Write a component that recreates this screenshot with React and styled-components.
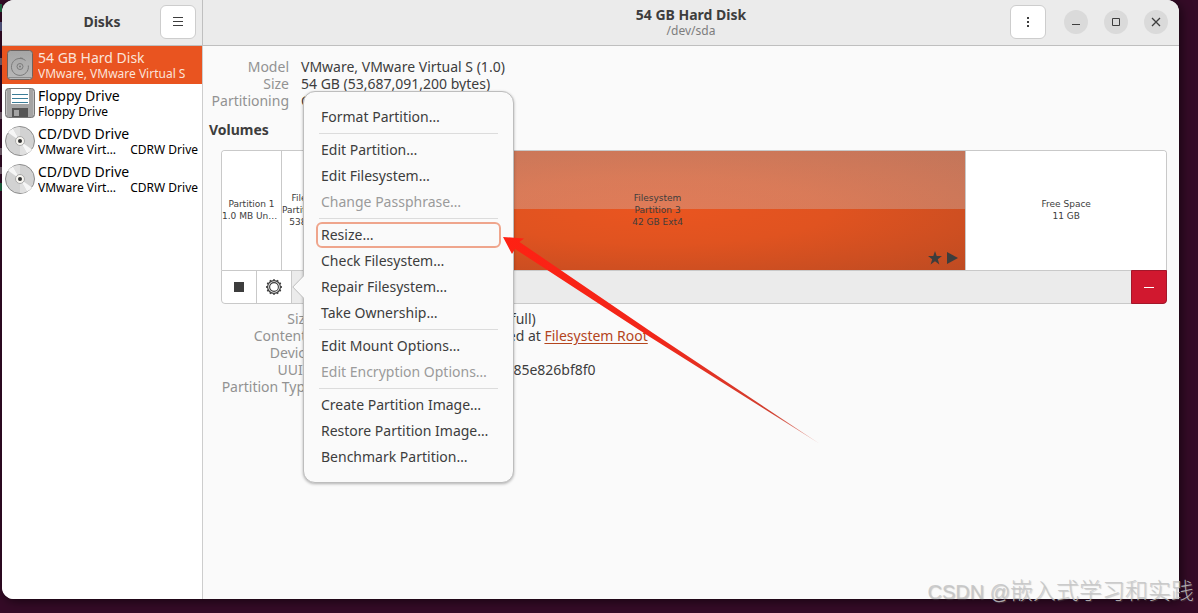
import React from "react";
import styled, { createGlobalStyle } from "styled-components";

const GlobalStyle = createGlobalStyle`
  * { box-sizing: border-box; }
  html, body, #root { height: 100%; }
  body {
    margin: 0;
    background: #350b27;
    color: #3d3d3d;
    font-family: "Noto Sans", "Open Sans", sans-serif;
    font-size: 14px;
    line-height: 17px;
  }
  button { font: inherit; color: inherit; padding: 0; margin: 0; }
`;

const Desktop = styled.div`
  position: relative;
  min-height: 100%;
  display: flex;
  padding: 0 19px 14px 2px;
  overflow: hidden;
  background:
    linear-gradient(#1f6b45, #1f6b45) 0 4px / 2px 8px no-repeat,
    linear-gradient(#5c5f8c, #5c5f8c) 0 22px / 2px 9px no-repeat,
    linear-gradient(#7a6474, #7a6474) 0 58px / 2px 7px no-repeat,
    linear-gradient(#7a6474, #7a6474) 0 112px / 2px 7px no-repeat,
    linear-gradient(#7a6474, #7a6474) 0 148px / 2px 7px no-repeat,
    linear-gradient(#7a6474, #7a6474) 0 167px / 2px 7px no-repeat,
    linear-gradient(#1f6b45, #1f6b45) 0 183px / 2px 8px no-repeat,
    #350b27;
`;

const Window = styled.div`
  flex: 1;
  min-width: 0;
  display: grid;
  grid-template-columns: 201px minmax(0, 1fr);
  grid-template-rows: 46px 1fr;
  border-radius: 12px 12px 0 12px;
  background: #fafafa;
  box-shadow: 2px 2px 12px rgba(0, 0, 0, 0.6);
`;

const HeaderBar = styled.header`
  display: grid;
  grid-template-columns: 1fr auto 1fr;
  align-items: center;
  background: #ebebeb;
  border-bottom: 1px solid #bfbfbf;
  border-right: ${(p) => (p.$side ? "1px solid #bfbfbf" : "0")};
  border-radius: ${(p) => (p.$side ? "12px 0 0 0" : "0 12px 0 0")};
  padding: 0 ${(p) => (p.$side ? 6 : 11)}px 2px;
`;

const HeaderTitle = styled.h1`
  grid-column: 2;
  margin: 0;
  font-size: 14px;
  line-height: 17px;
  font-weight: 700;
  text-align: center;
`;

const HeaderSubtitle = styled.span`
  display: block;
  font-size: 12px;
  line-height: 15px;
  font-weight: 400;
  color: #7d7d7d;
`;

const HeaderEnd = styled.div`
  display: flex;
  align-items: center;
  justify-content: flex-end;
  gap: 16px;
`;

const HeaderButton = styled.button`
  width: 36px;
  height: 34px;
  display: grid;
  place-items: center;
  background: #fff;
  border: 1px solid #cdcdcd;
  border-radius: 6px;
  margin-right: ${(p) => (p.$spaced ? 2 : 0)}px;
`;

const WindowButton = styled.button`
  width: 24px;
  height: 24px;
  display: grid;
  place-items: center;
  border: 0;
  border-radius: 50%;
  background: #dadada;
`;

const Sidebar = styled.ul`
  margin: 0;
  padding: 0;
  list-style: none;
  background: #fff;
  border-right: 1px solid #cdcdcd;
  border-radius: 0 0 0 12px;
`;

const DriveRow = styled.button`
  width: 100%;
  height: 38px;
  display: flex;
  align-items: center;
  gap: 3px;
  padding: 0 4px 0 3px;
  border: 0;
  text-align: left;
  background: ${(p) => (p.$active ? "#e95420" : "transparent")};
  color: ${(p) => (p.$active ? "#fbe3da" : "#000")};
`;

const DriveText = styled.span`
  flex: 1;
  min-width: 0;
`;

const DriveName = styled.span`
  display: block;
  font-size: 14px;
  line-height: 17px;
`;

const DriveMeta = styled.span`
  display: flex;
  justify-content: space-between;
  gap: 8px;
  font-size: 12px;
  line-height: 15px;
  white-space: nowrap;
`;

const Clip = styled.span`
  overflow: hidden;
  text-overflow: ellipsis;
`;

const Main = styled.main`
  padding: 12px 12px 12px 6px;
`;

const Details = styled.dl`
  display: grid;
  grid-template-columns: ${(p) => p.$labels}px 1fr;
  column-gap: ${(p) => p.$gap}px;
  margin: 0 0 0 ${(p) => p.$indent}px;
  white-space: nowrap;
`;

const Term = styled.dt`
  color: #929292;
  text-align: right;
`;

const Value = styled.dd`
  margin: 0;
  min-height: 17px;
`;

const Link = styled.a`
  color: #b4451d;
  text-decoration: underline;
  text-underline-offset: 2px;
`;

const SectionTitle = styled.h2`
  margin: 12px 0;
  font-size: 14px;
  line-height: 17px;
  font-weight: 700;
`;

const Volumes = styled.section`
  margin: 0 0 6px 12px;
`;

const VolumeGraph = styled.div`
  display: flex;
  height: 120px;
  border: 1px solid #c9c9c9;
  border-bottom: 0;
  border-radius: 4px 4px 0 0;
  background: #fff;
  overflow: hidden;
`;

const Partition = styled.div`
  position: relative;
  flex: ${(p) => p.$share} 1 0;
  min-width: 0;
  display: flex;
  flex-direction: column;
  justify-content: center;
  padding-bottom: 2px;
  border-right: 1px solid #c9c9c9;
  font-family: "DejaVu Sans", sans-serif;
  font-size: 9px;
  line-height: 12px;
  text-align: center;
  white-space: nowrap;
  color: #3d3d3d;
  background: ${(p) =>
    p.$selected
      ? "linear-gradient(rgba(203,203,203,.33), rgba(203,203,203,.33)) top / 100% 58px no-repeat, radial-gradient(ellipse farthest-corner at 50% 50%, #ea5520 0%, #e05320 40%, #be4b22 100%)"
      : "#fff"};
  &:last-child { border-right: 0; }
`;

const PartitionFlags = styled.span`
  position: absolute;
  right: 6px;
  bottom: 5px;
  display: flex;
  gap: 4px;
`;

const Toolbar = styled.div`
  display: flex;
  height: 34px;
  background: #ebebeb;
  border: 1px solid #c9c9c9;
  border-radius: 0 0 4px 4px;
`;

const ToolButton = styled.button`
  width: 35px;
  height: 32px;
  display: grid;
  place-items: center;
  background: #fff;
  border: 0;
  border-right: 1px solid #c9c9c9;
  border-radius: ${(p) => (p.$first ? "0 0 0 4px" : "0")};
`;

const DeleteButton = styled.button`
  width: 36px;
  height: 34px;
  margin: -1px -1px -1px auto;
  display: grid;
  place-items: center;
  background: #d1182f;
  border: 1px solid #a3172a;
  border-radius: 0 0 4px 0;
`;

const MenuAnchor = styled.div`
  position: relative;
`;

const Popover = styled.div`
  position: absolute;
  z-index: 2;
  top: 50%;
  left: calc(100% + 11px);
  transform: translateY(-50%);
  width: 211px;
  padding: 12px;
  background: #fafafa;
  border: 1px solid #bdbdbd;
  border-radius: 12px;
  box-shadow: 0 1px 3px rgba(0, 0, 0, 0.3);
`;

const PopoverTail = styled.svg`
  position: absolute;
  top: calc(50% - 12px);
  right: 100%;
`;

const MenuItem = styled.button`
  display: block;
  width: 100%;
  height: 26px;
  padding: 0 3px 2px;
  text-align: left;
  white-space: nowrap;
  background: transparent;
  border: 2px solid ${(p) => (p.$focused ? "#efa58c" : "transparent")};
  border-radius: 6px;
  color: #3d3d3d;
  &:disabled { color: #9b9b9b; }
`;

const MenuSeparator = styled.hr`
  height: 1px;
  margin: 3px;
  border: 0;
  background: #dcdcdc;
`;

const PointerArrow = styled.svg`
  position: absolute;
  z-index: 3;
  left: 503px;
  top: 236px;
  pointer-events: none;
`;

const Watermark = styled.div`
  position: absolute;
  z-index: 3;
  right: 4px;
  bottom: 6px;
  font-family: "Liberation Sans", "Noto Sans CJK SC", sans-serif;
  font-size: 20px;
  line-height: 30px;
  font-weight: 300;
  white-space: nowrap;
  color: rgba(196, 196, 196, 0.85);
  text-shadow: 1px 1px 1px rgba(110, 110, 110, 0.35);
`;

const WatermarkName = styled.span`
  font-size: 23px;
`;

const HardDiskIcon = () => (
  <svg width="30" height="32" viewBox="0 0 30 32">
    <defs>
      <linearGradient id="hd" x1="0" y1="0" x2="0" y2="1">
        <stop offset="0" stopColor="#a5a5a5" />
        <stop offset="1" stopColor="#b9b9b9" />
      </linearGradient>
    </defs>
    <rect x="2.5" y="1.5" width="25" height="29" rx="3" fill="url(#hd)" stroke="#6e625e" />
    <path d="M3.5 28.5h23" stroke="#8b8b8b" />
    <path d="M20.5 11.5A8.500 8.500 0 1 0 23.300 16.500M15 9a8.500 8.500 0 0 1 3 .5" fill="none" stroke="#7b7b7b" />
    <circle cx="15" cy="17.5" r="3" fill="none" stroke="#7b7b7b" />
    <circle cx="15" cy="17.5" r="1" fill="#7b7b7b" />
  </svg>
);

const FloppyIcon = () => (
  <svg width="30" height="32" viewBox="0 0 30 32">
    <rect x=".5" y="1.5" width="29" height="29" rx="3" fill="#a4a4a4" stroke="#777" />
    <path d="M1.5 4v24M28.5 4v24" stroke="#c0c0c0" />
    <rect x="6" y="2" width="18" height="15" fill="#fff" />
    <path d="M7 7.5h16M7 11.5h16M7 15.5h16" stroke="#3c7d98" />
    <rect x="7" y="21" width="16" height="9" fill="#555" />
    <rect x="9" y="23" width="5" height="6" fill="#a4a4a4" />
  </svg>
);

const DiscIcon = () => (
  <svg width="30" height="30" viewBox="0 0 30 30">
    <circle cx="15" cy="15" r="14.5" fill="#d2d2d2" stroke="#8d8d8d" />
    <path d="M15 15L3 6.5A14 14 0 0 1 8 2.500zM15 15L27 23.500A14 14 0 0 1 22 27.500z" fill="#f6f6f6" />
    <path d="M15 15L8 2.500A14 14 0 0 1 15 1zM15 15L22 27.500A14 14 0 0 1 15 29z" fill="#e0e0e0" />
    <circle cx="15" cy="15" r="4.5" fill="#f7f5f0" stroke="#aaa" />
    <circle cx="15" cy="15" r="2" fill="#333" />
  </svg>
);

const teeth = Array.from({ length: 12 }, (_, i) => i * 30);

const GearIcon = () => (
  <svg width="16" height="16" viewBox="0 0 16 16" fill="none" stroke="#3d3d3d">
    {teeth.map((a) => (
      <path key={a} d="M7.100 .8h1.800" strokeWidth="1.300" transform={`rotate(${a} 8 8)`} />
    ))}
    <circle cx="8" cy="8" r="6.4" strokeWidth="1.200" />
    <circle cx="8" cy="8" r="4.4" strokeWidth="1.100" />
  </svg>
);

const drives = [
  { name: "54 GB Hard Disk", meta: "VMware, VMware Virtual S", icon: <HardDiskIcon />, active: true },
  { name: "Floppy Drive", meta: "Floppy Drive", icon: <FloppyIcon /> },
  { name: "CD/DVD Drive", meta: "VMware Virtual SATA", extra: "CDRW Drive", icon: <DiscIcon /> },
  { name: "CD/DVD Drive", meta: "VMware Virtual SATA", extra: "CDRW Drive", icon: <DiscIcon /> },
];

const menu = [
  [{ label: "Format Partition…" }],
  [{ label: "Edit Partition…" }, { label: "Edit Filesystem…" }, { label: "Change Passphrase…", disabled: true }],
  [
    { label: "Resize…", focused: true },
    { label: "Check Filesystem…" },
    { label: "Repair Filesystem…" },
    { label: "Take Ownership…" },
  ],
  [{ label: "Edit Mount Options…" }, { label: "Edit Encryption Options…", disabled: true }],
  [{ label: "Create Partition Image…" }, { label: "Restore Partition Image…" }, { label: "Benchmark Partition…" }],
];

function VolumeMenu() {
  return (
    <Popover role="menu" aria-label="Additional partition options">
      <PopoverTail width="12" height="24" viewBox="0 0 12 24">
        <path d="M12 .5L.8 12 12 23.500" fill="#fafafa" stroke="#bdbdbd" />
      </PopoverTail>
      {menu.map((group, i) => (
        <React.Fragment key={i}>
          {i > 0 && <MenuSeparator />}
          {group.map((item) => (
            <MenuItem key={item.label} role="menuitem" disabled={item.disabled} $focused={item.focused}>
              {item.label}
            </MenuItem>
          ))}
        </React.Fragment>
      ))}
    </Popover>
  );
}

export default function App() {
  return (
    <Desktop>
      <GlobalStyle />
      <Window>
        <HeaderBar $side>
          <HeaderTitle as="h2">Disks</HeaderTitle>
          <HeaderEnd>
            <HeaderButton aria-label="Main menu">
              <svg width="16" height="16" viewBox="0 0 16 16" stroke="#3d3d3d">
                <path d="M3 3.500h10M3 7.500h10M3 11.500h10" />
              </svg>
            </HeaderButton>
          </HeaderEnd>
        </HeaderBar>
        <HeaderBar>
          <HeaderTitle>
            54 GB Hard Disk
            <HeaderSubtitle>/dev/sda</HeaderSubtitle>
          </HeaderTitle>
          <HeaderEnd>
            <HeaderButton aria-label="Drive options" $spaced>
              <svg width="16" height="16" viewBox="0 0 16 16" fill="#3d3d3d">
                <path d="M7 3h2v2H7zM7 7h2v2H7zM7 11h2v2H7z" />
              </svg>
            </HeaderButton>
            <WindowButton aria-label="Minimize">
              <svg width="16" height="16" viewBox="0 0 16 16" stroke="#3d3d3d">
                <path d="M4 10.500h8" />
              </svg>
            </WindowButton>
            <WindowButton aria-label="Maximize">
              <svg width="16" height="16" viewBox="0 0 16 16" stroke="#3d3d3d" fill="none">
                <path d="M4.500 4.500h7v7h-7z" />
              </svg>
            </WindowButton>
            <WindowButton aria-label="Close">
              <svg width="16" height="16" viewBox="0 0 16 16" stroke="#3d3d3d" strokeWidth="1.300">
                <path d="M4 4l8 8M12 4l-8 8" />
              </svg>
            </WindowButton>
          </HeaderEnd>
        </HeaderBar>
        <Sidebar>
          {drives.map((d, i) => (
            <li key={i}>
              <DriveRow $active={d.active}>
                {d.icon}
                <DriveText>
                  <DriveName>{d.name}</DriveName>
                  <DriveMeta>
                    <Clip>{d.meta}</Clip>
                    {d.extra && <span>{d.extra}</span>}
                  </DriveMeta>
                </DriveText>
              </DriveRow>
            </li>
          ))}
        </Sidebar>
        <Main>
          <Details $labels={80} $gap={12} $indent={0}>
            <Term>Model</Term>
            <Value>VMware, VMware Virtual S (1.0)</Value>
            <Term>Size</Term>
            <Value>54 GB (53,687,091,200 bytes)</Value>
            <Term>Partitioning</Term>
            <Value>GUID Partition Table</Value>
          </Details>
          <SectionTitle>Volumes</SectionTitle>
          <Volumes aria-label="Volumes">
            <VolumeGraph>
              <Partition $share={59}>
                <Clip>Partition 1</Clip>
                <Clip>1.0 MB Unknown</Clip>
              </Partition>
              <Partition $share={67}>
                <Clip>Filesystem</Clip>
                <Clip>Partition 2: EFI System</Clip>
                <Clip>538 MB FAT</Clip>
              </Partition>
              <Partition $share={617} $selected>
                <Clip>Filesystem</Clip>
                <Clip>Partition 3</Clip>
                <Clip>42 GB Ext4</Clip>
                <PartitionFlags>
                  <svg width="14" height="14" viewBox="0 0 14 14" fill="#3d3d3d">
                    <path d="M7 0l1.700 5H14L9.800 8.200l1.600 5.300L7 10.300l-4.400 3.200 1.600-5.300L0 5h5.300z" />
                  </svg>
                  <svg width="13" height="14" viewBox="0 0 13 14" fill="#3d3d3d">
                    <path d="M1 1l11 6-11 6z" />
                  </svg>
                </PartitionFlags>
              </Partition>
              <Partition $share={200}>
                <Clip>Free Space</Clip>
                <Clip>11 GB</Clip>
              </Partition>
            </VolumeGraph>
            <Toolbar>
              <ToolButton $first aria-label="Unmount selected partition">
                <svg width="10" height="10" viewBox="0 0 10 10">
                  <path d="M0 0h10v10H0z" fill="#3d3d3d" />
                </svg>
              </ToolButton>
              <MenuAnchor>
                <ToolButton aria-label="Additional partition options" aria-haspopup="menu">
                  <GearIcon />
                </ToolButton>
                <VolumeMenu />
              </MenuAnchor>
              <DeleteButton aria-label="Delete selected partition">
                <svg width="10" height="2" viewBox="0 0 10 2">
                  <path d="M0 1.500h10" stroke="#fff" />
                </svg>
              </DeleteButton>
            </Toolbar>
          </Volumes>
          <Details $labels={92} $gap={18} $indent={12}>
            <Term>Size</Term>
            <Value>42 GB — 30 GB free (28.3% full)</Value>
            <Term>Contents</Term>
            <Value>
              Ext4 (version 1.0) — Mounted at <Link href="#root">Filesystem Root</Link>
            </Value>
            <Term>Device</Term>
            <Value>/dev/sda3</Value>
            <Term>UUID</Term>
            <Value>2c1f0a4e-71b6-4d0e-93a5-785e826bf8f0</Value>
            <Term>Partition Type</Term>
            <Value>Linux Filesystem</Value>
          </Details>
        </Main>
      </Window>
      <PointerArrow width="318" height="210" viewBox="0 0 318 210" aria-hidden="true">
        <defs>
          <linearGradient id="arrow" gradientUnits="userSpaceOnUse" x1="0" y1="0" x2="316" y2="208">
            <stop offset="0" stopColor="#ff2113" />
            <stop offset=".5" stopColor="#f0271a" />
            <stop offset=".85" stopColor="#d04030" />
            <stop offset="1" stopColor="#d04030" stopOpacity=".4" />
          </linearGradient>
        </defs>
        <path d="M0 1L21 2.500 16.500 6 150 97 317 208 147 101 12 13 9 18z" fill="url(#arrow)" />
      </PointerArrow>
      <Watermark>
        CSDN @<WatermarkName>嵌入式学习和实践</WatermarkName>
      </Watermark>
    </Desktop>
  );
}
